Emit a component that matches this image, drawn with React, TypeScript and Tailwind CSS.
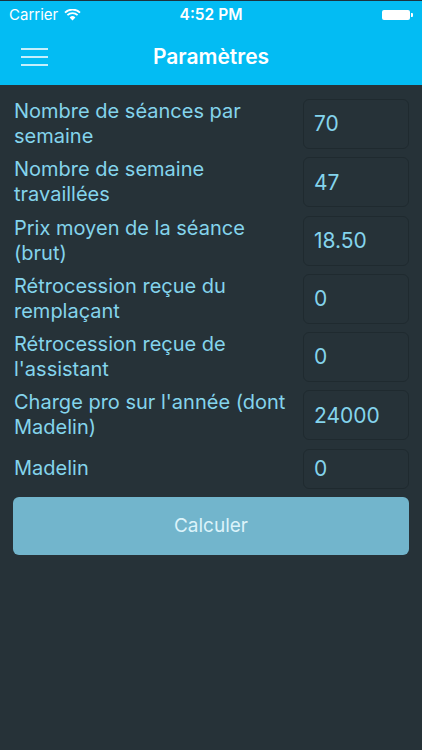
import React from 'react';

const fields = [
  { label: 'Nombre de séances par semaine', value: '70' },
  { label: 'Nombre de semaine travaillées', value: '47' },
  { label: 'Prix moyen de la séance (brut)', value: '18.50' },
  { label: 'Rétrocession reçue du remplaçant', value: '0' },
  { label: "Rétrocession reçue de l'assistant", value: '0' },
  { label: "Charge pro sur l'année (dont Madelin)", value: '24000' },
];

const App: React.FC = () => {
  return (
    <div className="w-[422px] h-[750px] bg-[#263238] font-['Inter',sans-serif] overflow-hidden">
      {/* status bar + nav */}
      <div className="bg-[#03bcf3] border-t border-[#1c3340]">
        <div className="h-[28px] flex items-center px-[9px] text-white text-[15px] relative">
          <span>Carrier</span>
          <svg className="ml-[6px]" width="17" height="12" viewBox="0 0 17 12">
            <path d="M8.5 11.5 L5.6 8.4 A4.2 4.2 0 0 1 11.4 8.4 Z" fill="white" />
            <path d="M3.4 6.2 A7.4 7.4 0 0 1 13.6 6.2" stroke="white" strokeWidth="1.8" fill="none" />
            <path d="M1 3.6 A10.8 10.8 0 0 1 16 3.6" stroke="white" strokeWidth="1.8" fill="none" />
          </svg>
          <span className="absolute left-0 right-0 text-center text-[15.5px] font-semibold">4:52 PM</span>
          <div className="ml-auto flex items-center">
            <div className="w-[28px] h-[10px] bg-white rounded-[2px]" />
            <div className="w-[2px] h-[4px] bg-white ml-[1px] rounded-r-[1px]" />
          </div>
        </div>
        <div className="h-[56px] flex items-center relative">
          <div className="ml-[21px] flex flex-col gap-[6.5px]">
            <div className="w-[27px] h-[1.5px] bg-[#c4effc]" />
            <div className="w-[27px] h-[1.5px] bg-[#c4effc]" />
            <div className="w-[27px] h-[1.5px] bg-[#c4effc]" />
          </div>
          <span className="absolute left-0 right-0 text-center text-white text-[21px] font-semibold">
            Paramètres
          </span>
        </div>
      </div>

      {/* form */}
      <div className="px-[13px] pt-[14px] flex flex-col gap-[8.3px]">
        {fields.map((f) => (
          <div key={f.label} className="flex items-center gap-[10px]">
            <div className="flex-1 pl-[1px] text-[#84d4ec] text-[20px] leading-[25px]">{f.label}</div>
            <div className="w-[106px] h-[50px] rounded-[6px] border border-[#1f2a2f] flex items-center px-[10px] text-[#84d4ec] text-[21px]">
              {f.value}
            </div>
          </div>
        ))}
        <div className="flex items-center gap-[10px]">
          <div className="flex-1 pl-[1px] text-[#84d4ec] text-[20px] leading-[25px]">Madelin</div>
          <div className="w-[106px] h-[40px] rounded-[6px] border border-[#1f2a2f] flex items-center px-[10px] text-[#84d4ec] text-[21px]">
            0
          </div>
        </div>
        <button className="h-[58px] rounded-[6px] bg-[#72b5cc] text-[#dcf3fa] text-[19px]">Calculer</button>
      </div>
    </div>
  );
};

export default App;
